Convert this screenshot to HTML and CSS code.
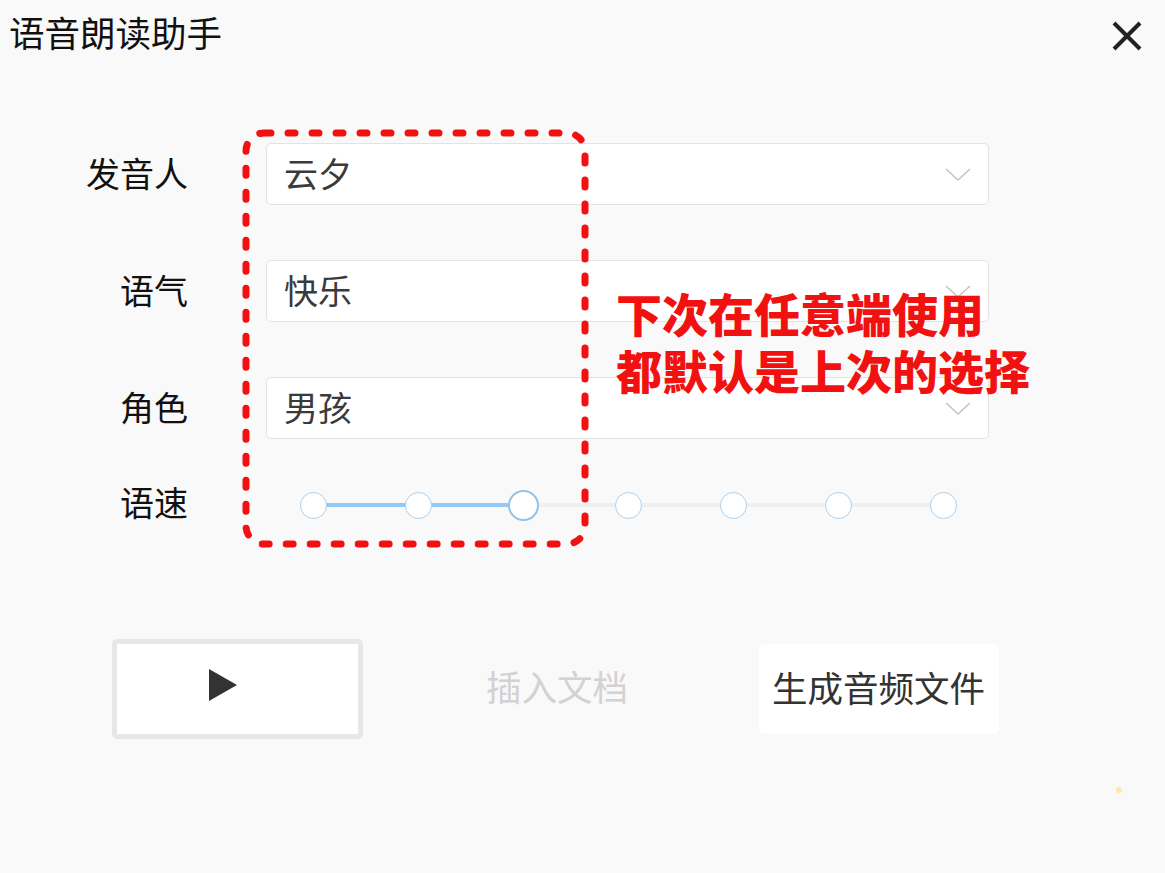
FILE: index.html
```html
<!DOCTYPE html>
<html lang="zh-CN">
<head>
<meta charset="utf-8">
<title>语音朗读助手</title>
<link rel="stylesheet" href="styles.css">
</head>
<body>
<div class="app">
  <header class="header">
    <h1 class="title">语音朗读助手</h1>
    <button class="close" aria-label="关闭">
      <svg width="32" height="32" viewBox="0 0 32 32"><path d="M3 3 L29 29 M29 3 L3 29" stroke="#222" stroke-width="4" fill="none"/></svg>
    </button>
  </header>

  <main class="form">
    <label class="label">发音人</label>
    <div class="select"><span>云夕</span><svg class="chev" width="26" height="14" viewBox="0 0 26 14"><path d="M1 1 L13 12 L25 1" stroke="#c4c4c4" stroke-width="1.6" fill="none"/></svg></div>

    <label class="label">语气</label>
    <div class="select"><span>快乐</span><svg class="chev" width="26" height="14" viewBox="0 0 26 14"><path d="M1 1 L13 12 L25 1" stroke="#c4c4c4" stroke-width="1.6" fill="none"/></svg></div>

    <label class="label">角色</label>
    <div class="select"><span>男孩</span><svg class="chev" width="26" height="14" viewBox="0 0 26 14"><path d="M1 1 L13 12 L25 1" stroke="#c4c4c4" stroke-width="1.6" fill="none"/></svg></div>

    <label class="label label-speed">语速</label>
    <div class="slider">
      <div class="track"></div>
      <div class="track-active"></div>
      <span class="cell"><i class="dot"></i></span>
      <span class="cell"><i class="dot"></i></span>
      <span class="cell"><i class="dot dot-current"></i></span>
      <span class="cell"><i class="dot"></i></span>
      <span class="cell"><i class="dot"></i></span>
      <span class="cell"><i class="dot"></i></span>
      <span class="cell"><i class="dot"></i></span>
    </div>
  </main>

  <div class="actions">
    <button class="play" aria-label="播放">
      <svg width="30" height="32" viewBox="0 0 30 32"><path d="M1 0 L29 16 L1 32 Z" fill="#333"/></svg>
    </button>
    <button class="insert">插入文档</button>
    <button class="generate">生成音频文件</button>
  </div>

  <svg class="annot-box" width="360" height="430" viewBox="0 0 360 430">
    <rect x="6" y="8" width="339" height="411" rx="18" ry="18" fill="none" stroke="#f21111" stroke-width="7" stroke-linecap="round" stroke-dasharray="7 17"/>
  </svg>
  <div class="annot-text">下次在任意端使用<br>都默认是上次的选择</div>
  <i class="spark"></i>
</div>
</body>
</html>
```

FILE: styles.css
```css
* { box-sizing: border-box; }
html, body { margin: 0; padding: 0; }
body {
  background: #f9f9f9;
  font-family: "Noto Sans CJK SC", "Noto Sans", sans-serif;
  color: #111;
}
.app {
  position: relative;
  width: 1165px;
  height: 873px;
  overflow: hidden;
}
.header {
  display: flex;
  justify-content: space-between;
  align-items: flex-start;
  height: 70px;
}
.title {
  margin: 0;
  padding: 7px 0 0 9px;
  font-size: 35.5px;
  font-weight: 400;
  line-height: 50px;
  color: #111;
}
.close {
  margin: 20px 22px 0 0;
  padding: 0;
  border: 0;
  background: transparent;
  width: 32px;
  height: 32px;
  display: flex;
}
.form {
  display: grid;
  grid-template-columns: 188px 723px;
  grid-template-rows: 62px 62px 62px 40px;
  row-gap: 55px;
  column-gap: 78px;
  margin-top: 73px;
}
.label {
  display: flex;
  align-items: center;
  justify-content: flex-end;
  font-size: 34px;
  color: #111;
  line-height: 1;
  margin-top: -2px;
}
.label-speed {
  align-self: start;
  height: 40px;
  margin-top: -12px;
}
.select {
  display: flex;
  align-items: center;
  justify-content: space-between;
  background: #fff;
  border: 1.5px solid #e3e3e3;
  border-radius: 5px;
  padding: 0 17px 0 17px;
  font-size: 34px;
  color: #3a3a3a;
}
.select span { margin-top: -4px; }
.chev { margin-top: 2px; }
.slider {
  position: relative;
  display: flex;
  align-items: center;
  margin-top: -9px;
  margin-left: -5.5px;
  width: 735px;
  height: 40px;
}
.track {
  position: absolute;
  left: 52.5px;
  right: 52.5px;
  top: 18px;
  height: 4px;
  background: #efefef;
}
.track-active {
  position: absolute;
  left: 52.5px;
  width: 210px;
  top: 18px;
  height: 4px;
  background: #91c8f6;
}
.cell {
  position: relative;
  width: 105px;
  display: flex;
  justify-content: center;
  align-items: center;
}
.dot {
  display: block;
  width: 27px;
  height: 27px;
  border-radius: 50%;
  background: #fff;
  border: 1px solid #a9d0ef;
}
.dot-current {
  width: 31px;
  height: 31px;
  border: 2px solid #93c3ea;
}
.actions {
  display: flex;
  align-items: center;
  margin-top: 105px;
  padding-left: 112px;
}
.play {
  width: 251px;
  height: 100px;
  border: 5px solid #e7e7e7;
  border-radius: 5px;
  background: #fff;
  display: flex;
  align-items: center;
  justify-content: center;
  padding: 0 30px 0 0;
}
.play svg { margin-top: -8px; }
.insert {
  margin-left: 123px;
  padding: 0;
  border: 0;
  background: transparent;
  font-family: inherit;
  font-size: 35.5px;
  color: #d2d2d2;
  line-height: 1;
  margin-top: -6px;
}
.generate {
  margin-left: 131px;
  width: 240px;
  height: 90px;
  padding: 0 0 4px 13px;
  border: 0;
  border-radius: 6px;
  background: #fff;
  font-family: inherit;
  font-size: 35.5px;
  color: #333;
  text-align: left;
  line-height: 1;
}
.annot-box {
  position: absolute;
  left: 240px;
  top: 125px;
}
.annot-text {
  position: absolute;
  left: 616px;
  top: 284px;
  font-size: 46px;
  line-height: 57px;
  font-weight: 900;
  color: #f21111;
  white-space: nowrap;
}
.spark {
  position: absolute;
  left: 1116px;
  top: 787px;
  width: 6px;
  height: 6px;
  border-radius: 50%;
  background: #ffe9a8;
}
```
